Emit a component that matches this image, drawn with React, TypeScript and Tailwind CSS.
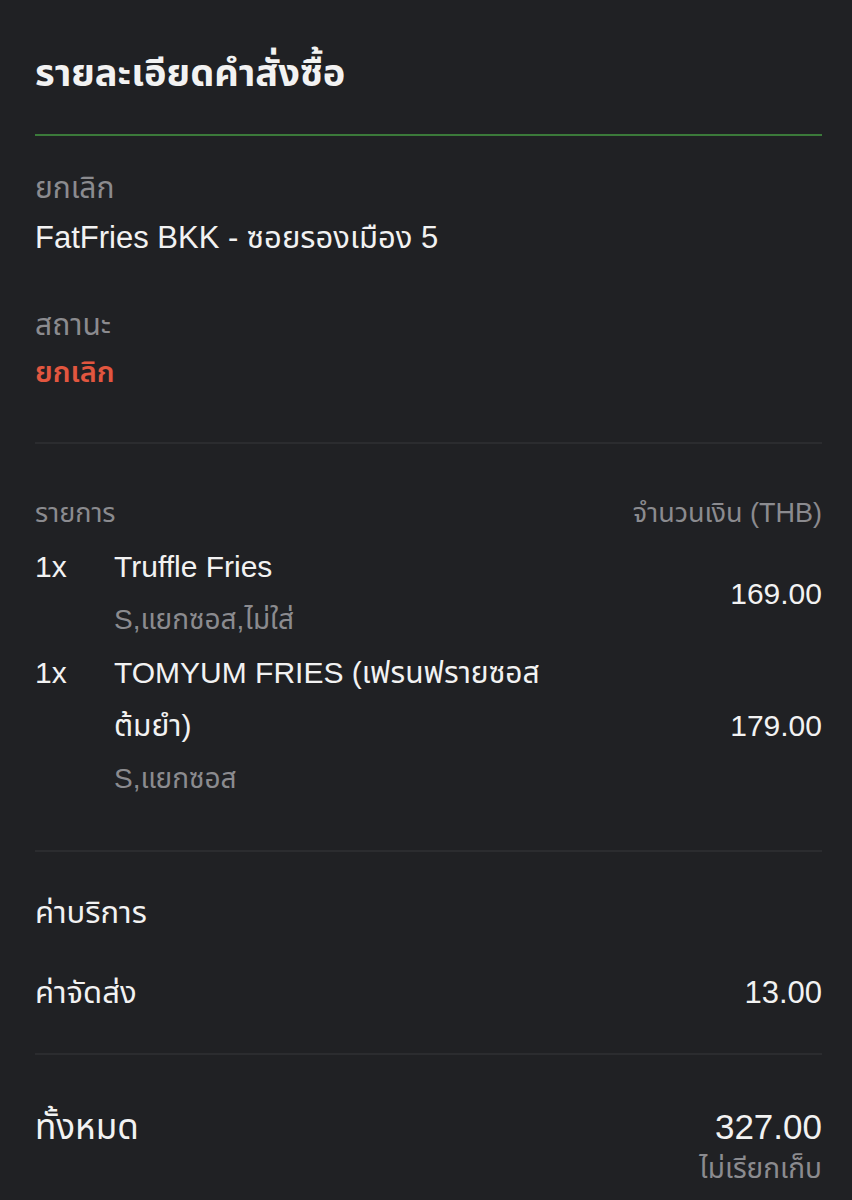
import React from 'react';

const items = [
  { qty: '1x', name: ['Truffle Fries'], note: 'S,แยกซอส,ไม่ใส่', price: '169.00' },
  { qty: '1x', name: ['TOMYUM FRIES (เฟรนฟรายซอส', 'ต้มยำ)'], note: 'S,แยกซอส', price: '179.00' },
];

const Divider = ({ className = '' }: { className?: string }) => (
  <div className={`h-[2px] bg-[#2b2c2f] ${className}`} />
);

export default function App() {
  return (
    <div
      className="min-h-[1200px] w-full bg-[#202124] pl-[35px] pr-[30px] text-[#f2f2f2]"
      style={{ fontFamily: '"Liberation Sans", "Noto Sans", "Noto Sans Thai", sans-serif' }}
    >
      <h1 className="pt-[50px] text-[38px] font-bold leading-[46px]">รายละเอียดคำสั่งซื้อ</h1>
      <div className="mt-[38px] h-[2px] bg-[#3b7a3a]" />

      <section className="pt-[34px]">
        <div className="text-[30px] leading-[36px] text-[#8b8b8f]">ยกเลิก</div>
        <div className="mt-[14px] text-[31px] leading-[36px]">FatFries BKK - ซอยรองเมือง 5</div>
        <div className="mt-[51px] text-[30px] leading-[36px] text-[#8b8b8f]">สถานะ</div>
        <div className="mt-[11px] text-[29px] font-semibold leading-[36px] text-[#e2563f]">ยกเลิก</div>
      </section>

      <Divider className="mt-[52px]" />

      <section className="pt-[43px]">
        <div className="flex justify-between text-[27px] leading-[53px] text-[#8b8b8f]">
          <span>รายการ</span>
          <span>จำนวนเงิน (THB)</span>
        </div>
        {items.map((it, i) => (
          <div key={i} className="flex items-center text-[30px] leading-[53px]">
            <div className="w-[79px] self-start">{it.qty}</div>
            <div className="flex-1">
              {it.name.map((n, j) => (
                <div key={j}>{n}</div>
              ))}
              <div className="text-[28px] text-[#8b8b8f]">{it.note}</div>
            </div>
            <div>{it.price}</div>
          </div>
        ))}
      </section>

      <Divider className="mt-[45px]" />

      <section className="pt-[43px] text-[31px] leading-[36px]">
        <div>ค่าบริการ</div>
        <div className="mt-[44px] flex justify-between">
          <span>ค่าจัดส่ง</span>
          <span>13.00</span>
        </div>
      </section>

      <Divider className="mt-[42px]" />

      <section className="flex justify-between pt-[50px]">
        <div className="text-[35px] leading-[44px]">ทั้งหมด</div>
        <div className="text-right">
          <div className="text-[35px] leading-[44px]">327.00</div>
          <div className="mt-[4px] text-[28px] leading-[32px] text-[#8b8b8f]">ไม่เรียกเก็บ</div>
        </div>
      </section>
    </div>
  );
}
